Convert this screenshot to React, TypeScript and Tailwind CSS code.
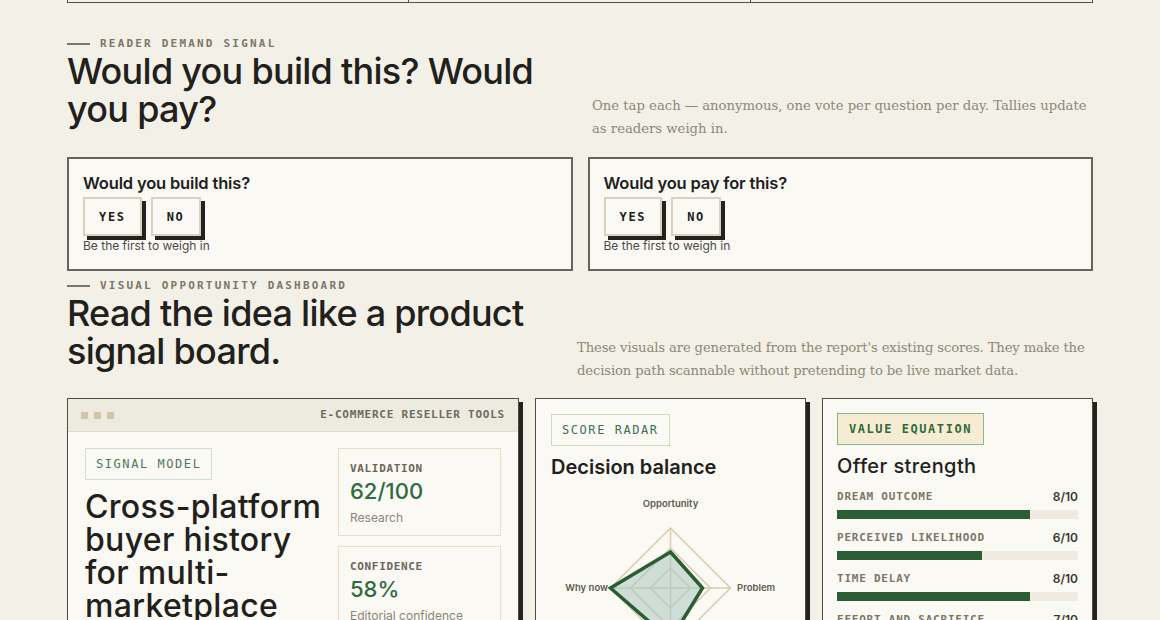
import React from 'react';

type Row = { label: string; score: number };

const offerRows: Row[] = [
  { label: 'Dream outcome', score: 8 },
  { label: 'Perceived likelihood', score: 6 },
  { label: 'Time delay', score: 8 },
  { label: 'Effort and sacrifice', score: 7 },
];

function Eyebrow({ children }: { children: React.ReactNode }) {
  return (
    <div className="flex items-center gap-[10px]">
      <span className="h-[2px] w-[23px] bg-[#7c776a]" />
      <span className="font-['DejaVu_Sans_Mono',monospace] text-[11px] leading-4 font-bold tracking-[0.2em] text-[#7c776a] uppercase">
        {children}
      </span>
    </div>
  );
}

function VoteButton({ label }: { label: string }) {
  return (
    <button
      type="button"
      className="flex h-[39px] items-center border-2 border-[#d8d1bf] bg-[#faf9f4] px-[14px] font-['DejaVu_Sans_Mono',monospace] text-[12px] font-bold tracking-[0.14em] text-[#22201b] shadow-[4px_4px_0_#24221d]"
    >
      {label}
    </button>
  );
}

function VoteCard({ question }: { question: string }) {
  return (
    <div className="border-2 border-[#66635a] bg-[#faf9f4] px-[14px] pt-[13px] pb-[15px]">
      <h3 className="text-[16.5px] leading-[22px] font-semibold tracking-[-0.01em]">{question}</h3>
      <div className="mt-[3px] flex gap-[9px]">
        <VoteButton label="YES" />
        <VoteButton label="NO" />
      </div>
      <p className="mt-[2px] text-[12px] leading-4 text-[#4e4a42]">Be the first to weigh in</p>
    </div>
  );
}

function Stat({ label, value, note }: { label: string; value: string; note: string }) {
  return (
    <div className="border-[1.5px] border-[#e8e0c6] px-[11px] pt-[13px] pb-[9px]">
      <div className="font-['DejaVu_Sans_Mono',monospace] text-[11px] leading-[14px] font-bold tracking-[0.06em] text-[#6b665a]">
        {label}
      </div>
      <div className="mt-[1px] text-[22px] leading-[28px] font-medium text-[#2f6b3d]">{value}</div>
      <div className="mt-[5px] text-[12px] leading-4 text-[#8a8578]">{note}</div>
    </div>
  );
}

function Radar() {
  const cx = 119.5;
  const cy = 100;
  const R = 60;
  const diamond = (r: number) => `${cx},${cy - r} ${cx + r},${cy} ${cx},${cy + r} ${cx - r},${cy}`;
  // opportunity, problem, competition, why now
  const data = `${cx},${cy - 36} ${cx + 32},${cy} ${cx},${cy + 52} ${cx - 60},${cy}`;
  return (
    <svg width="241" height="212" viewBox="0 0 241 212" className="mt-[9px] block">
      {[R, 40, 20].map((r) => (
        <polygon key={r} points={diamond(r)} fill="none" stroke="#d9ccb0" strokeWidth="1.5" />
      ))}
      <line x1={cx} y1={cy - R} x2={cx} y2={cy + R} stroke="#d9ccb0" strokeWidth="1.5" />
      <line x1={cx - R} y1={cy} x2={cx + R} y2={cy} stroke="#d9ccb0" strokeWidth="1.5" />
      <polygon
        points={data}
        fill="#a9c9c0"
        fillOpacity="0.55"
        stroke="#2b5d34"
        strokeWidth="3.5"
        strokeLinejoin="miter"
      />
      <g fontFamily="Inter, sans-serif" fontSize="9.5" fontWeight="600" fill="#5f5a4f">
        <text x={cx} y={19} textAnchor="middle">Opportunity</text>
        <text x={57} y={cy + 3} textAnchor="end">Why now</text>
        <text x={186} y={cy + 3}>Problem</text>
        <text x={cx} y={cy + R + 22} textAnchor="middle">Competition</text>
      </g>
    </svg>
  );
}

export default function App() {
  return (
    <div className="min-h-screen bg-[#f3f0e7] font-['Inter',sans-serif] text-[#22201b]">
      <div className="mx-auto w-[1026px] pb-16">
        {/* tail of the previous grid */}
        <div className="grid h-[3px] grid-cols-3 border-x border-b border-[#55524a]">
          <div className="border-r border-[#55524a]" />
          <div className="border-r border-[#55524a]" />
          <div />
        </div>

        <section className="mt-[33px]">
          <div className="flex items-end justify-between">
            <div className="w-[500px]">
              <Eyebrow>Reader demand signal</Eyebrow>
              <h2 className="mb-[13px] text-[36px] leading-[38px] font-medium tracking-[-0.02em]">
                Would you build this? Would you pay?
              </h2>
            </div>
            <p className="mb-[1px] w-[501px] font-['DejaVu_Serif',serif] text-[13.2px] leading-[23px] text-[#8d8879]">
              One tap each — anonymous, one vote per question per day. Tallies update as readers weigh in.
            </p>
          </div>
          <div className="mt-4 grid grid-cols-2 gap-[15px]">
            <VoteCard question="Would you build this?" />
            <VoteCard question="Would you pay for this?" />
          </div>
        </section>

        <section className="mt-[7px]">
          <div className="flex items-end justify-between">
            <div className="w-[500px]">
              <Eyebrow>Visual opportunity dashboard</Eyebrow>
              <h2 className="mb-[12px] text-[36px] leading-[38px] font-medium tracking-[-0.02em]">
                Read the idea like a product signal board.
              </h2>
            </div>
            <p className="w-[516px] font-['DejaVu_Serif',serif] text-[13.2px] leading-[23px] tracking-[-0.01em] text-[#8d8879]">
              These visuals are generated from the report's existing scores. They make the decision path
              scannable without pretending to be live market data.
            </p>
          </div>

          <div className="mt-4 grid grid-cols-[452px_271px_271px] items-start gap-4">
            <div className="border border-[#4f4c44] bg-[#faf9f4] shadow-[4px_4px_0_#24221d]">
              <div className="flex h-[33px] items-center justify-between border-b border-[#e3ddcb] bg-[#edeadf] px-[13px]">
                <div className="flex gap-[6px]">
                  <span className="size-[7px] bg-[#cfc6a8]" />
                  <span className="size-[7px] bg-[#cfc6a8]" />
                  <span className="size-[7px] bg-[#cfc6a8]" />
                </div>
                <span className="font-['DejaVu_Sans_Mono',monospace] text-[11px] font-bold tracking-[0.07em] text-[#6e6a5e]">
                  E-COMMERCE RESELLER TOOLS
                </span>
              </div>
              <div className="grid grid-cols-[1fr_163px] gap-4 px-[17px] pt-[16px] pb-5">
                <div>
                  <span className="inline-flex h-[32px] items-center border-[1.5px] border-[#cfe0d4] px-[10px] font-['DejaVu_Sans_Mono',monospace] text-[12px] tracking-[0.13em] text-[#4d7a58]">
                    SIGNAL MODEL
                  </span>
                  <h3 className="mt-[10px] text-[32px] leading-[33px] font-medium tracking-[0.01em]">
                    Cross-platform buyer history for multi-marketplace sellers
                  </h3>
                </div>
                <div className="flex flex-col gap-[10px]">
                  <Stat label="VALIDATION" value="62/100" note="Research" />
                  <Stat label="CONFIDENCE" value="58%" note="Editorial confidence" />
                </div>
              </div>
            </div>

            <div className="border border-[#4f4c44] bg-[#faf9f4] p-[15px] shadow-[4px_4px_0_#24221d]">
              <span className="inline-flex h-[32px] items-center border-[1.5px] border-[#cfdcb9] px-[10px] font-['DejaVu_Sans_Mono',monospace] text-[12px] tracking-[0.13em] text-[#3e7050]">
                SCORE RADAR
              </span>
              <h3 className="mt-[9px] text-[20px] leading-6 font-semibold">Decision balance</h3>
              <Radar />
            </div>

            <div className="border border-[#4f4c44] bg-[#faf9f4] p-[14px] shadow-[4px_4px_0_#24221d]">
              <span className="inline-flex h-[32px] items-center border-[1.5px] border-[#8db68c] bg-[#f6ecd4] px-[11px] font-['DejaVu_Sans_Mono',monospace] text-[12px] font-bold tracking-[0.13em] text-[#2f6a3b]">
                VALUE EQUATION
              </span>
              <h3 className="mt-[9px] text-[20px] leading-6 font-medium tracking-[0.02em]">Offer strength</h3>
              <div className="mt-3 flex flex-col gap-3">
                {offerRows.map((row) => (
                  <div key={row.label}>
                    <div className="flex items-center justify-between leading-[14px]">
                      <span className="font-['DejaVu_Sans_Mono',monospace] text-[11px] font-bold tracking-[0.07em] text-[#7b7567] uppercase">
                        {row.label}
                      </span>
                      <span className="text-[12px] font-semibold text-[#3a372f]">{row.score}/10</span>
                    </div>
                    <div className="mt-[6px] h-[9px] bg-[#efebe0]">
                      <div className="h-full bg-[#2c5e36]" style={{ width: `${row.score * 10}%` }} />
                    </div>
                  </div>
                ))}
              </div>
            </div>
          </div>
        </section>
      </div>
    </div>
  );
}
